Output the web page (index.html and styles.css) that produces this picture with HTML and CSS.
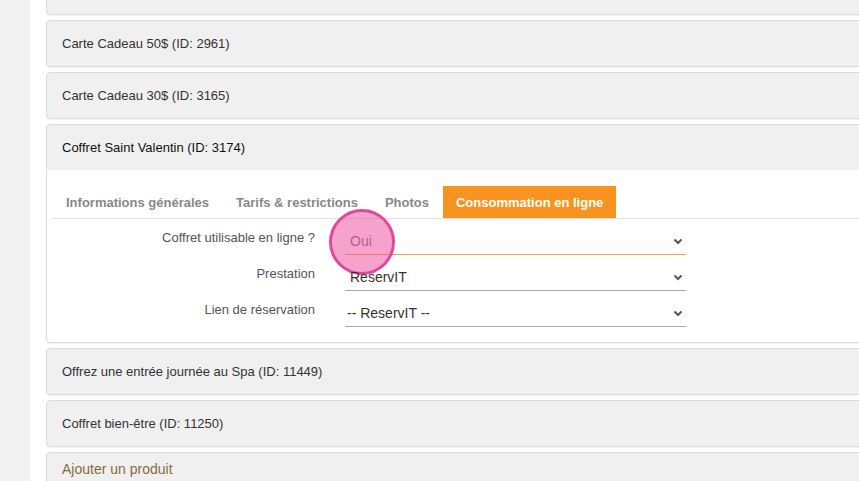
FILE: index.html
```html
<!DOCTYPE html>
<html lang="fr">
<head>
  <meta charset="UTF-8">
  <title>Produits</title>
  <link rel="stylesheet" href="styles.css">
</head>
<body>
  <div class="sidebar"></div>

  <div class="main">
    <!-- panneau précédent, coupé par le défilement -->
    <div class="panel">
      <div class="panel-heading">&nbsp;</div>
    </div>

    <div class="panel">
      <div class="panel-heading">Carte Cadeau 50$ (ID: 2961)</div>
    </div>

    <div class="panel">
      <div class="panel-heading">Carte Cadeau 30$ (ID: 3165)</div>
    </div>

    <div class="panel open">
      <div class="panel-heading">Coffret Saint Valentin (ID: 3174)</div>
      <div class="panel-body">
        <ul class="tabs">
          <li>Informations générales</li>
          <li>Tarifs &amp; restrictions</li>
          <li>Photos</li>
          <li class="active">Consommation en ligne</li>
        </ul>

        <div class="form-row">
          <label>Coffret utilisable en ligne ?</label>
          <div class="select focus">
            <span>Oui</span>
            <svg width="10" height="7" viewBox="0 0 10 7"><path d="M1.5 1.5 L5 5 L8.5 1.5" fill="none" stroke="#555" stroke-width="2"/></svg>
            <div class="click"></div>
          </div>
        </div>
        <div class="form-row">
          <label>Prestation</label>
          <div class="select">
            <span>ReservIT</span>
            <svg width="10" height="7" viewBox="0 0 10 7"><path d="M1.5 1.5 L5 5 L8.5 1.5" fill="none" stroke="#555" stroke-width="2"/></svg>
          </div>
        </div>
        <div class="form-row">
          <label>Lien de réservation</label>
          <div class="select">
            <span class="dash">-- ReservIT --</span>
            <svg width="10" height="7" viewBox="0 0 10 7"><path d="M1.5 1.5 L5 5 L8.5 1.5" fill="none" stroke="#555" stroke-width="2"/></svg>
          </div>
        </div>
      </div>
    </div>

    <div class="panel">
      <div class="panel-heading">Offrez une entrée journée au Spa (ID: 11449)</div>
    </div>

    <div class="panel">
      <div class="panel-heading">Coffret bien-être (ID: 11250)</div>
    </div>

    <div class="panel">
      <div class="panel-heading add">Ajouter un produit</div>
    </div>
  </div>
</body>
</html>
```

FILE: styles.css
```css
html, body {
  height: 100%;
}
body {
  font-family: "Liberation Sans", Arial, sans-serif;
  font-size: 13px;
  color: #333;
  background: #fff;
  margin: 0;
  padding: 0;
  display: flex;
  overflow: hidden;
}
.sidebar {
  width: 30px;
  flex-shrink: 0;
  background: #f2f2f2;
}
.main {
  flex: 1;
  margin-left: 16px;
  margin-right: -20px;
  margin-top: -32px;
}
.panel {
  border: 1px solid #dcdcdc;
  border-radius: 4px;
  background: #f0f0f0;
  margin-bottom: 5px;
  box-shadow: 0 1px 1px rgba(0, 0, 0, 0.05);
}
.panel-heading {
  padding: 15px;
  line-height: 15px;
}
.panel-heading.add {
  padding-top: 9px;
  font-size: 14px;
  color: #8a6a3d;
}
.panel.open .panel-heading {
  color: #111;
}
.panel-body {
  background: #fff;
  padding: 16px 0 15px 5px;
  border-radius: 0 0 4px 4px;
}
.tabs {
  list-style: none;
  margin: 0;
  padding: 0 0 0 1px;
  display: flex;
  gap: 1px;
  border-bottom: 1px solid #e2e2e2;
}
.tabs li {
  padding: 9px 13px 8px;
  line-height: 15px;
  font-weight: bold;
  color: #888;
}
.tabs li.active {
  background: #f7931e;
  color: #fff;
}
.form-row {
  display: flex;
  height: 34px;
  margin-top: 2px;
}
.form-row label {
  width: 263px;
  padding-right: 15px;
  padding-top: 9px;
  line-height: 15px;
  text-align: right;
  color: #555;
}
.select {
  position: relative;
  width: 341px;
  margin-left: 15px;
  box-sizing: border-box;
  border-bottom: 1px solid #a8a8a8;
  display: flex;
  align-items: center;
  justify-content: space-between;
  padding: 7px 3px 0 5px;
  font-size: 14px;
  color: #333;
}
.select .dash {
  margin-left: -3px;
}
.select.focus {
  border-bottom-color: #f0a444;
}
.select.focus span {
  color: #777;
}
.click {
  position: absolute;
  left: -16px;
  top: -12px;
  width: 60px;
  height: 60px;
  border: 3px solid #e0489b;
  border-radius: 50%;
  background: rgba(236, 72, 153, 0.5);
}
```
